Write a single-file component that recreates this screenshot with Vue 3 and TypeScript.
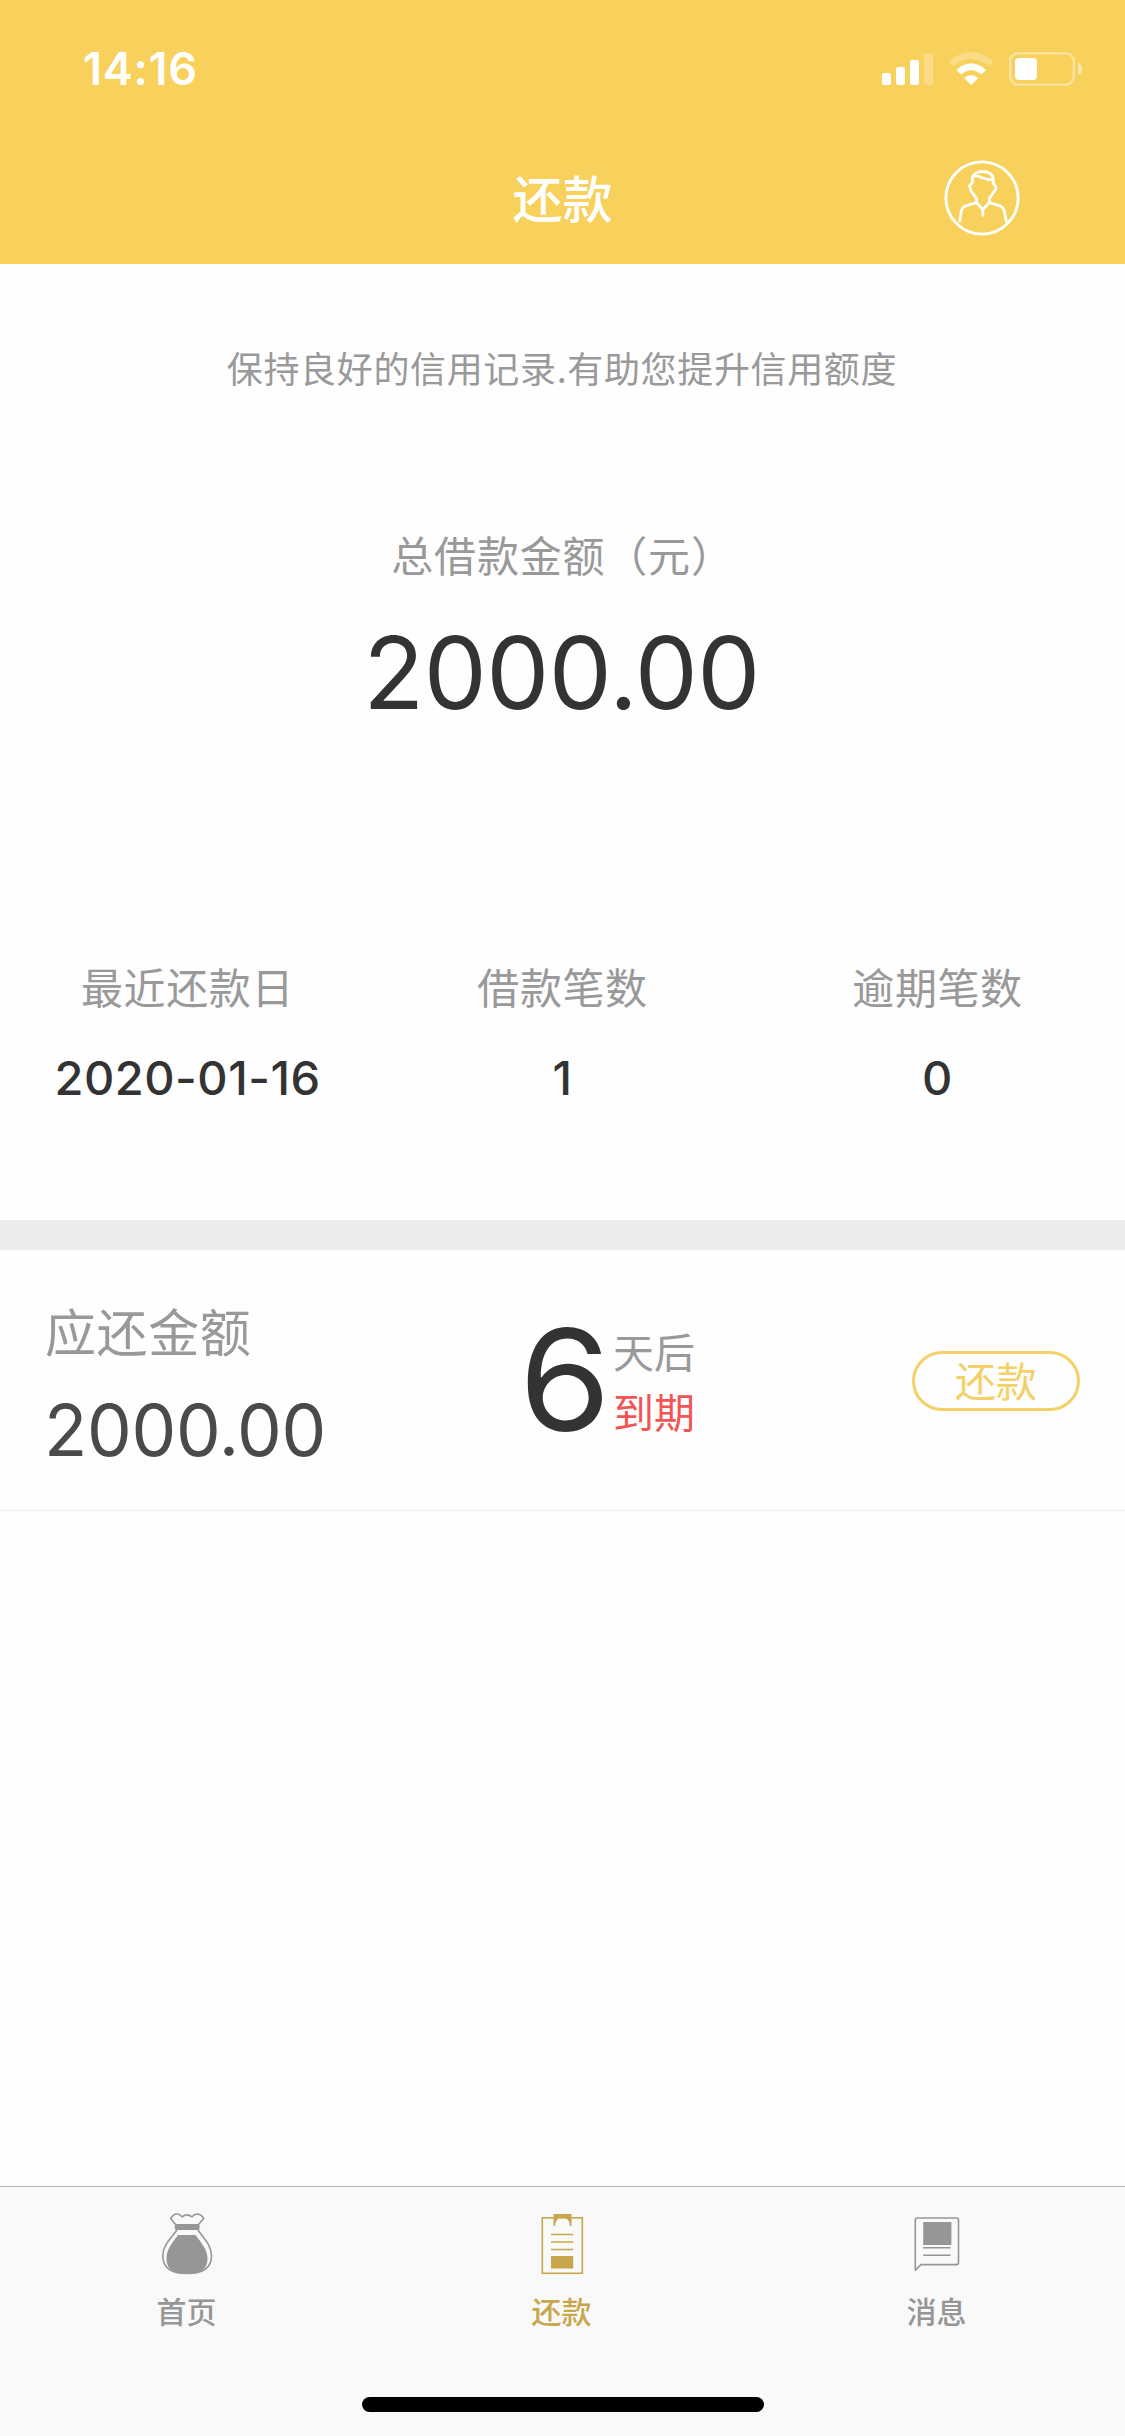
<script setup lang="ts">
interface Stat {
  label: string
  value: string
}

interface Tab {
  id: 'home' | 'repay' | 'message'
  label: string
}

const stats: Stat[] = [
  { label: '最近还款日', value: '2020-01-16' },
  { label: '借款笔数', value: '1' },
  { label: '逾期笔数', value: '0' },
]

const tabs: Tab[] = [
  { id: 'home', label: '首页' },
  { id: 'repay', label: '还款' },
  { id: 'message', label: '消息' },
]

const activeTab: Tab['id'] = 'repay'
</script>

<template>
  <div class="screen">
    <header class="header">
      <div class="status-bar">
        <span class="clock">14:16</span>
        <svg class="status-icons" width="204" height="40" viewBox="880 48 204 40" fill="#fff">
          <rect x="882" y="73" width="9" height="12" rx="2" />
          <rect x="896" y="67" width="9" height="18" rx="2" />
          <rect x="910" y="60" width="9" height="25" rx="2" />
          <rect x="924" y="53" width="9" height="32" rx="2" opacity=".25" />
          <path d="M948.7 61.3Q971.2 42.7 993.7 61.3L989.2 66.3Q971.2 52 953.2 66.3Z" opacity=".25" />
          <path d="M956.3 70Q971.2 56.6 986 70L981.3 74.6Q971.2 65.8 961 74.6Z" />
          <path d="M964.3 78.2Q971.2 71.8 978 78.2L971.2 85Z" />
          <rect x="1010.2" y="53.2" width="63.6" height="31.6" rx="8" fill="none" stroke="#fff" stroke-width="2.5" opacity=".4" />
          <rect x="1015" y="58" width="22" height="22" rx="4" />
          <path d="M1078 62.5Q1082 64.5 1082 69T1078 75.5Z" opacity=".5" />
        </svg>
      </div>
      <div class="nav-bar">
        <h1 class="title">还款</h1>
        <svg class="avatar" width="76" height="76" viewBox="944.5 159.5 76 76" fill="none" stroke="#fff" stroke-width="2.8" stroke-linecap="round" stroke-linejoin="round">
          <circle cx="982.5" cy="197.5" r="36.1" />
          <path d="M977 202V198L971.5 190.5Q970.8 187 970 186Q970.3 184 972.8 182.5V178C973.2 173.5 977.5 171 983.4 171S993.5 174 993.7 178.5V183Q996 184.5 996.6 187Q996 190 994.7 190.8L989.8 198V202" />
          <path d="M974.5 175.7C980 173.8 984 180.5 993.6 179" />
          <path d="M977 202L966.5 205.3Q962 207 961.6 212L960.3 220.5M989.8 202L1000.5 205.3Q1004.8 207.5 1005 212L1006.7 220.5M977 202L983.4 209L989.8 202M983.4 209V214.8" />
        </svg>
      </div>
    </header>

    <section class="summary">
      <p class="tip">保持良好的信用记录.有助您提升信用额度</p>
      <p class="total-label">总借款金额（元）</p>
      <p class="total">2000.00</p>
      <div class="stats">
        <div v-for="stat in stats" :key="stat.label" class="stat">
          <span class="stat-label">{{ stat.label }}</span>
          <span class="stat-value">{{ stat.value }}</span>
        </div>
      </div>
    </section>

    <section class="bill">
      <div class="bill-due">
        <span class="due-label">应还金额</span>
        <span class="due-amount">2000.00</span>
      </div>
      <div class="countdown">
        <span class="days">6</span>
        <div class="countdown-text">
          <span>天后</span>
          <span class="expire">到期</span>
        </div>
      </div>
      <button class="repay" type="button">还款</button>
    </section>

    <footer class="tab-bar">
      <nav class="tabs">
        <a v-for="tab in tabs" :key="tab.id" :class="['tab', { active: tab.id === activeTab }]">
          <svg v-if="tab.id === 'home'" width="66" height="66" viewBox="155.5 2211 66 66" fill="none" stroke="currentColor" stroke-width="1.6" stroke-linejoin="round">
            <path d="M176 2224.5L171.2 2218.5Q174 2213.5 178 2214Q180.5 2214.5 182.5 2216.8Q187.5 2213 192.5 2216.8Q195 2214 198 2214Q202 2214.5 204.3 2218.5L199 2224.5" />
            <rect x="175.3" y="2224" width="24.7" height="6" rx="1.5" fill="currentColor" stroke="none" />
            <path d="M177.5 2230C171 2239 163.3 2245 163.3 2256C163.3 2268 171 2273.5 187.5 2273.5S212 2268 212 2256C212 2245 204.5 2239 198.5 2230" />
            <path d="M178.500 2235H196C202 2243 208 2250 208 2258C208 2268 203 2274 187.500 2274S167 2268 167 2258C167 2250 172.500 2243 178.500 2235Z" fill="currentColor" stroke="none" />
          </svg>
          <svg v-else-if="tab.id === 'repay'" width="66" height="66" viewBox="529.5 2211 66 66" fill="none" stroke="currentColor" stroke-width="1.6">
            <rect x="541.8" y="2217.8" width="40" height="55.5" />
            <path d="M553 2214H571V2226H569.300C569.300 2221 566.300 2217.600 562 2217.600S554.700 2221 554.700 2226H553Z" fill="currentColor" stroke="none" />
            <path d="M550.5 2234.5H572.7M550.5 2242H572.7M550.5 2249.5H572.7" />
            <rect x="550.5" y="2256" width="22.2" height="12.5" fill="currentColor" stroke="none" />
          </svg>
          <svg v-else width="66" height="66" viewBox="904.5 2211 66 66" fill="none" stroke="currentColor" stroke-width="1.6" stroke-linejoin="round">
            <path d="M917 2218H956Q958 2218 958 2220V2262.5Q958 2264.6 956 2264.6H920.5L914.8 2270.2V2220Q914.8 2218 917 2218Z" />
            <rect x="922.7" y="2222" width="28.2" height="23" fill="currentColor" stroke="none" />
            <path d="M922.7 2247.8H950M922.7 2255.3H950" />
          </svg>
          <span class="tab-label">{{ tab.label }}</span>
        </a>
      </nav>
      <div class="home-indicator"></div>
    </footer>
  </div>
</template>

<style>
body {
  margin: 0;
  background: #fefefe;
}
</style>

<style scoped>
.screen {
  display: flex;
  flex-direction: column;
  width: 1125px;
  height: 2436px;
  overflow: hidden;
  background: #fefefe;
  font-family: "Noto Sans CJK SC", sans-serif;
  color: #999;
}

p,
h1 {
  margin: 0;
}

.header {
  height: 264px;
  background: #f7d15c;
  color: #fff;
}

.status-bar {
  display: flex;
  justify-content: space-between;
  align-items: flex-start;
  height: 132px;
  box-sizing: border-box;
  padding: 48px 41px 0 83px;
}

.clock {
  font: 600 45px/42px Inter, sans-serif;
  letter-spacing: 0.7px;
}

.nav-bar {
  display: grid;
  grid-template-columns: 1fr auto 1fr;
  align-items: center;
  height: 132px;
}

.title {
  grid-column: 2;
  font-size: 50px;
  line-height: 52px;
  font-weight: 500;
  margin-top: -4px;
}

.avatar {
  justify-self: end;
  margin-right: 105px;
  margin-top: -1px;
}

.summary {
  display: flex;
  flex-direction: column;
  align-items: center;
  height: 956px;
  border-bottom: 30px solid #ececec;
}

.tip {
  margin-top: 85px;
  margin-right: 1px;
  font-size: 36px;
  line-height: 36px;
  letter-spacing: 0.65px;
}

.total-label {
  margin-top: 148px;
  font-size: 42px;
  line-height: 42px;
  letter-spacing: 0.8px;
}

.total {
  margin-top: 48px;
  font: 400 100px/100px Inter, sans-serif;
  letter-spacing: -0.5px;
  margin-right: 2px;
  color: #333;
}

.stats {
  display: grid;
  grid-template-columns: repeat(3, 1fr);
  width: 100%;
  margin-top: 242px;
}

.stat {
  display: flex;
  flex-direction: column;
  align-items: center;
  gap: 47px;
}

.stat-label {
  font-size: 42px;
  line-height: 42px;
  letter-spacing: 0.6px;
}

.stat-value {
  font: 500 47px/48px Inter, sans-serif;
  letter-spacing: 0.5px;
  color: #333;
}

.bill {
  display: flex;
  align-items: center;
  height: 260px;
  border-bottom: 1px solid #ececec;
}

.bill-due {
  display: flex;
  flex-direction: column;
  gap: 39px;
  width: 475px;
  box-sizing: border-box;
  padding: 9px 0 0 45px;
}

.due-label {
  font-size: 51px;
  line-height: 51px;
  letter-spacing: 0.6px;
}

.due-amount {
  font: 400 71px/70px Inter, sans-serif;
  letter-spacing: -0.3px;
  margin-left: -1px;
  color: #4a4a4a;
}

.countdown {
  display: flex;
  align-items: center;
  width: 389px;
  margin-left: 48px;
}

.days {
  width: 90px;
  font: 400 141px/142px Inter, sans-serif;
  color: #333;
  transform: scaleX(1.05);
  transform-origin: 90% 50%;
}

.countdown-text {
  display: flex;
  flex-direction: column;
  gap: 18px;
  font-size: 41px;
  line-height: 42px;
}

.expire {
  color: #f25555;
}

.repay {
  width: 168px;
  height: 60px;
  box-sizing: border-box;
  margin-top: 1px;
  padding: 0 0 4px;
  border: 3px solid #f4d068;
  border-radius: 30px;
  background: transparent;
  font-family: inherit;
  font-size: 41px;
  line-height: 50px;
  color: #f4d068;
}

.tab-bar {
  display: flex;
  flex-direction: column;
  align-items: center;
  justify-content: space-between;
  height: 250px;
  box-sizing: border-box;
  margin-top: auto;
  padding: 24px 0;
  border-top: 1px solid #b2b2b2;
  background: #f9f9f9;
}

.tabs {
  display: grid;
  grid-template-columns: repeat(3, 1fr);
  width: 100%;
}

.tab {
  display: flex;
  flex-direction: column;
  align-items: center;
  gap: 18px;
  color: #969696;
}

.tab.active {
  color: #c8a64b;
}

.tab-label {
  margin-right: 2px;
  font-size: 30px;
  line-height: 30px;
  font-weight: 500;
}

.home-indicator {
  width: 402px;
  height: 15px;
  border-radius: 8px;
  background: #000;
}
</style>
